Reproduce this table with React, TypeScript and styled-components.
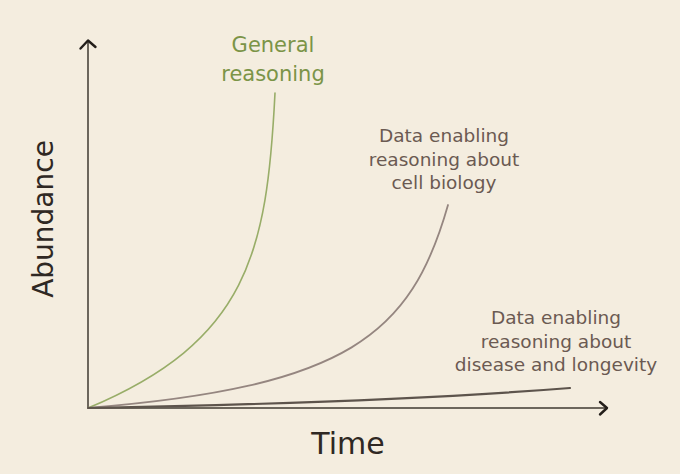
import React from "react";
import styled, { createGlobalStyle } from "styled-components";

type Tone = "green" | "brown" | "ink";

const palette: Record<Tone, { text: string; line: string }> = {
  green: { text: "#7b9447", line: "#98ad68" },
  brown: { text: "#6b5a52", line: "#958680" },
  ink: { text: "#2f2823", line: "#5d544c" },
};

// each trend is one cubic from the origin of the axes
const series: { id: string; tone: Tone; width: number; d: string }[] = [
  { id: "general", tone: "green", width: 1.6, d: "M88,408 C248,341 267,253 275,93" },
  { id: "cell", tone: "brown", width: 1.8, d: "M88,408 C348,387 411,335 448,205" },
  { id: "disease", tone: "ink", width: 2.2, d: "M88,408 C250,405 420,400 570,388" },
];

const labels: { id: string; tone: Tone; x: number; y: number; size: number; gap: number; lines: string[] }[] = [
  { id: "general", tone: "green", x: 273, y: 52, size: 21, gap: 29, lines: ["General", "reasoning"] },
  {
    id: "cell",
    tone: "brown",
    x: 444,
    y: 142,
    size: 18.5,
    gap: 23.5,
    lines: ["Data enabling", "reasoning about", "cell biology"],
  },
  {
    id: "disease",
    tone: "brown",
    x: 556,
    y: 324,
    size: 18.5,
    gap: 23.5,
    lines: ["Data enabling", "reasoning about", "disease and longevity"],
  },
];

export default function App() {
  return (
    <>
      <GlobalStyle />
      <Frame>
        <Chart viewBox="0 0 680 474" width={680} height={474}>
          <AxisLine d="M88,408 L88,41" />
          <ArrowHead points="80.5,48.5 88,40.5 95.5,47" />
          <AxisLine d="M88,408 L606,408" />
          <ArrowHead points="600,402 607,408 600,414.5" />

          {series.map(({ id, tone, width, d }) => (
            <Curve key={id} d={d} $tone={tone} $width={width} />
          ))}

          {labels.map(({ id, tone, x, y, size, gap, lines }) => (
            <Label key={id} x={x} y={y} $tone={tone} $size={size}>
              {lines.map((line, i) => (
                <tspan key={line} x={x} dy={i === 0 ? 0 : gap}>
                  {line}
                </tspan>
              ))}
            </Label>
          ))}

          <AxisTitle transform="translate(53,219) rotate(-90)" x={0} y={0}>
            Abundance
          </AxisTitle>
          <AxisTitle x={348} y={454} $size={30}>
            Time
          </AxisTitle>
        </Chart>
      </Frame>
    </>
  );
}

const GlobalStyle = createGlobalStyle`
  html, body {
    margin: 0;
    padding: 0;
    background: #f4eddf;
  }
`;

const Frame = styled.div`
  width: 680px;
  height: 474px;
  background: #f4eddf;
  overflow: hidden;
`;

const Chart = styled.svg`
  display: block;
`;

const AxisLine = styled.path`
  fill: none;
  stroke: #3f3831;
  stroke-width: 1.5;
`;

const ArrowHead = styled.polyline`
  fill: none;
  stroke: #231e1a;
  stroke-width: 2.4;
  stroke-linecap: round;
  stroke-linejoin: round;
`;

const Curve = styled.path<{ $tone: Tone; $width: number }>`
  fill: none;
  stroke: ${({ $tone }) => palette[$tone].line};
  stroke-width: ${({ $width }) => $width};
  stroke-linecap: round;
`;

const Label = styled.text<{ $tone: Tone; $size: number }>`
  font-family: "DejaVu Sans", "Liberation Sans", sans-serif;
  font-size: ${({ $size }) => $size}px;
  fill: ${({ $tone }) => palette[$tone].text};
  text-anchor: middle;
`;

const AxisTitle = styled.text<{ $size?: number }>`
  font-family: "DejaVu Sans", "Liberation Sans", sans-serif;
  font-size: ${({ $size = 28 }) => $size}px;
  fill: ${palette.ink.text};
  text-anchor: middle;
`;
